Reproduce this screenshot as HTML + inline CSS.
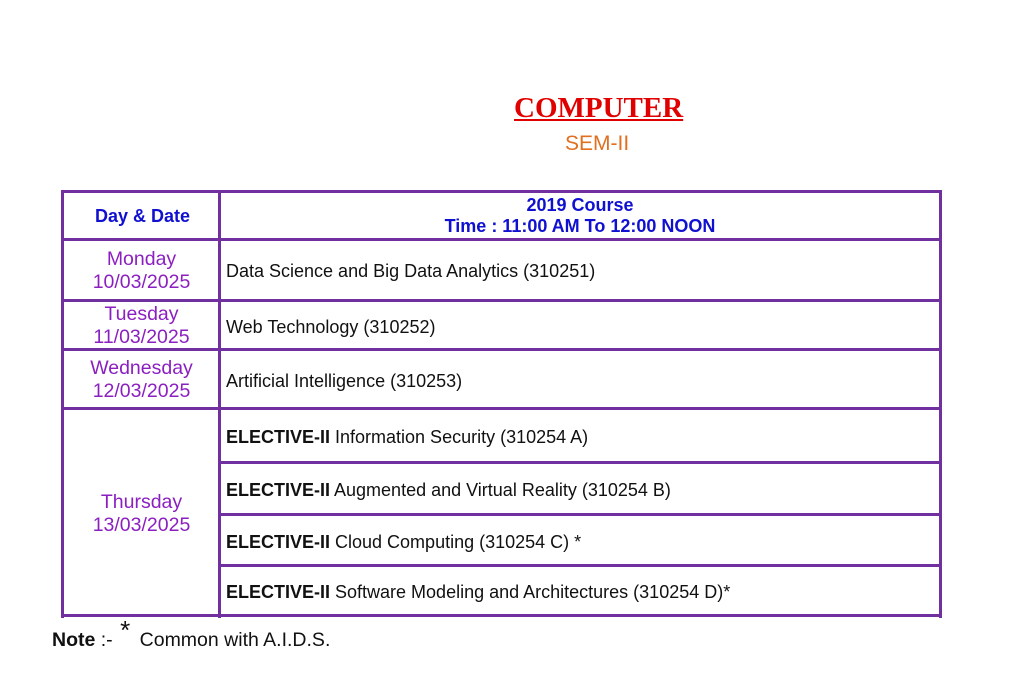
<!DOCTYPE html>
<html><head><meta charset="utf-8"><style>
body{margin:0;width:1028px;height:697px;background:#fff;position:relative;font-family:"Liberation Sans",Arial,sans-serif;overflow:hidden}
.h{position:absolute;left:61px;width:881px;height:3px;background:#7030a0}
.v{position:absolute;top:190px;height:428px;width:3px;background:#7030a0}
.t{position:absolute;white-space:nowrap}
.d{position:absolute;left:64px;width:155px;text-align:center;color:#8b1fc0;font-size:19.5px;line-height:23px}
.s{position:absolute;left:226px;font-size:18px;color:#111;white-space:nowrap}
</style></head><body>
<div class="t" style="left:514px;top:92px;font-family:'Liberation Serif',serif;font-weight:bold;font-size:29px;color:#e00000;text-decoration:underline">COMPUTER</div>
<div class="t" style="left:565px;top:132px;font-size:21px;color:#e07020">SEM-II</div>
<div class="h" style="top:190px"></div>
<div class="h" style="top:238px"></div>
<div class="h" style="top:299px"></div>
<div class="h" style="top:348px"></div>
<div class="h" style="top:407px"></div>
<div class="h" style="top:461px;left:219px;width:723px"></div>
<div class="h" style="top:513px;left:219px;width:723px"></div>
<div class="h" style="top:564px;left:219px;width:723px"></div>
<div class="h" style="top:614px"></div>
<div class="v" style="left:61px"></div>
<div class="v" style="left:218px"></div>
<div class="v" style="left:939px"></div>
<div class="t" style="left:95px;top:206px;font-weight:bold;font-size:18px;color:#1010d0">Day &amp; Date</div>
<div class="t" style="left:221px;width:718px;top:195px;text-align:center;font-weight:bold;font-size:18px;color:#1010d0;line-height:21px">2019 Course<br>Time : 11:00 AM To 12:00 NOON</div>
<div class="d" style="top:248px">Monday<br>10/03/2025</div>
<div class="d" style="top:303px">Tuesday<br>11/03/2025</div>
<div class="d" style="top:357px">Wednesday<br>12/03/2025</div>
<div class="d" style="top:491px">Thursday<br>13/03/2025</div>
<div class="s" style="top:261px">Data Science and Big Data Analytics (310251)</div>
<div class="s" style="top:317px">Web Technology (310252)</div>
<div class="s" style="top:371px">Artificial Intelligence (310253)</div>
<div class="s" style="top:427px"><b>ELECTIVE-II</b> Information Security (310254 A)</div>
<div class="s" style="top:480px"><b>ELECTIVE-II</b> Augmented and Virtual Reality (310254 B)</div>
<div class="s" style="top:532px"><b>ELECTIVE-II</b> Cloud Computing (310254 C) *</div>
<div class="s" style="top:582px"><b>ELECTIVE-II</b> Software Modeling and Architectures (310254 D)*</div>
<div class="t" style="left:52px;top:622px;font-size:19.5px;color:#111"><b>Note</b> :- <span style="font-size:26px;position:relative;top:-7px;margin:0 4px 0 2px">*</span> Common with A.I.D.S.</div>
</body></html>
